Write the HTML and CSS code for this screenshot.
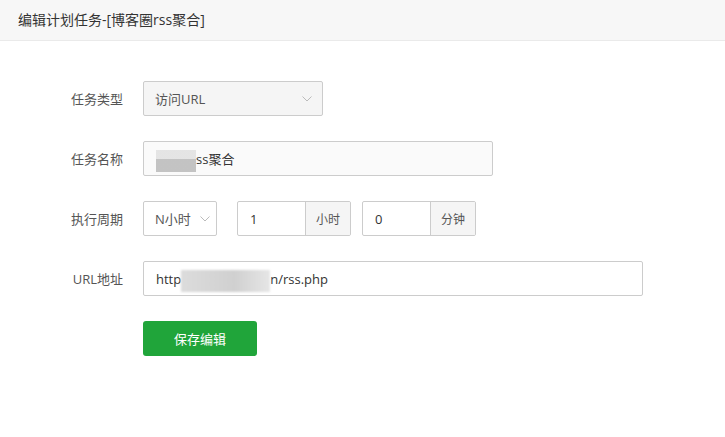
FILE: index.html
```html
<!DOCTYPE html>
<html>
<head>
<meta charset="utf-8">
<link rel="stylesheet" href="styles.css">
</head>
<body>
<div class="header">编辑计划任务-[博客圈rss聚合]</div>
<div class="form">
  <div class="row">
    <div class="label">任务类型</div>
    <div class="select select-type gray">
      <span>访问URL</span>
      <svg class="chev" width="10" height="6" viewBox="0 0 10 6"><path d="M0.5 0.5 L5 5 L9.5 0.5" fill="none" stroke="#bbb" stroke-width="1"/></svg>
    </div>
  </div>
  <div class="row">
    <div class="label">任务名称</div>
    <div class="input input-name light"><span class="blur1"></span>ss聚合</div>
  </div>
  <div class="row">
    <div class="label">执行周期</div>
    <div class="select select-cycle">
      <span>N小时</span>
      <svg class="chev" width="10" height="6" viewBox="0 0 10 6"><path d="M0.5 0.5 L5 5 L9.5 0.5" fill="none" stroke="#bbb" stroke-width="1"/></svg>
    </div>
    <div class="group">
      <div class="gin">1</div>
      <div class="addon">小时</div>
    </div>
    <div class="group g2">
      <div class="gin">0</div>
      <div class="addon">分钟</div>
    </div>
  </div>
  <div class="row">
    <div class="label">URL地址</div>
    <div class="input input-url">http<span class="blur2"></span>n/rss.php</div>
  </div>
  <div class="row">
    <div class="label"></div>
    <button class="btn">保存编辑</button>
  </div>
</div>
</body>
</html>
```
FILE: styles.css
```css
body {
  margin: 0;
  font-family: "Open Sans", "Noto Sans CJK SC", sans-serif;
  font-size: 13px;
  color: #333;
  background: #fff;
}
.header {
  height: 40px;
  line-height: 40px;
  padding-left: 18px;
  background: #f7f7f7;
  border-bottom: 1px solid #eaeaea;
  color: #333;
  font-size: 14px;
}
.form {
  padding-top: 40px;
}
.row {
  display: flex;
  align-items: center;
  height: 35px;
  margin-bottom: 25px;
}
.label {
  width: 123px;
  text-align: right;
  margin-right: 20px;
  color: #555;
}
.select, .input, .group {
  box-sizing: border-box;
  height: 35px;
  border: 1px solid #ccc;
  border-radius: 2px;
  display: flex;
  align-items: center;
}
.select {
  justify-content: space-between;
  padding: 0 10px 0 11px;
  color: #555;
}
.gray { background: #f5f5f5; }
.light { background: #fafafa; }
.select-type { width: 180px; }
.select-cycle { width: 74px; margin-right: 20px; padding-right: 6px; }
.input {
  padding-left: 12px;
  color: #333;
}
.input-name { width: 350px; }
.input-url { width: 500px; }
.blur1 {
  display: inline-block;
  width: 40px;
  height: 22px;
  margin-top: 4px;
  background: linear-gradient(to bottom, #e2e2e2 0 40%, #bdbdbd 40% 100%);
  opacity: 0.9;
}
.blur2 {
  display: inline-block;
  width: 89px;
  height: 22px;
  margin-top: 4px;
  background: linear-gradient(to right, #dcdcdc, #d0d0d0 60%, #e6e6e6);
  filter: blur(1px);
}
.group {
  padding: 0;
  overflow: hidden;
}
.g2 { margin-left: 11px; }
.gin {
  width: 67px;
  padding-left: 12px;
  box-sizing: border-box;
  height: 100%;
  display: flex;
  align-items: center;
}
.addon {
  width: 45px;
  height: 100%;
  box-sizing: border-box;
  border-left: 1px solid #ccc;
  background: #f5f5f5;
  display: flex;
  align-items: center;
  justify-content: center;
  color: #555;
  font-size: 12px;
}
.btn {
  width: 114px;
  height: 35px;
  border: none;
  border-radius: 3px;
  background: #20a53a;
  color: #fff;
  font-family: inherit;
  font-size: 13px;
  padding: 0;
}
```
